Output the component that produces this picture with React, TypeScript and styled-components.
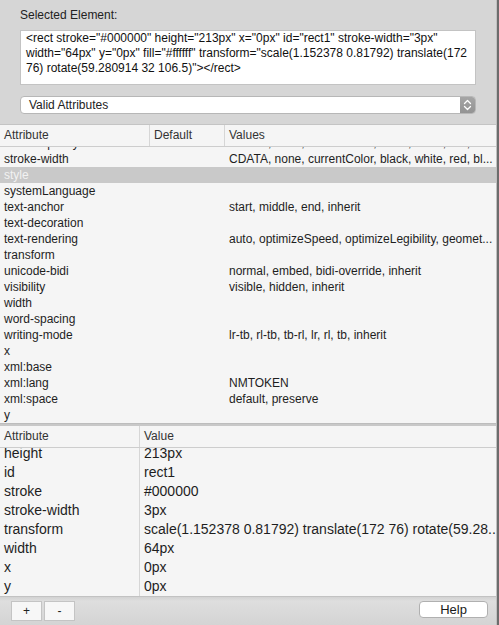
import React, { useLayoutEffect, useRef } from 'react';
import styled, { createGlobalStyle } from 'styled-components';

const Global = createGlobalStyle`
  html, body { margin: 0; padding: 0; width: 499px; height: 625px; overflow: hidden; background: #d6d6d6; }
  body { font-family: "Liberation Sans", Arial, sans-serif; color: #1e1e1e; }
  #root { height: 625px; }
`;

const Window = styled.div`
  width: 499px;
  height: 625px;
  box-sizing: border-box;
  border-right: 2px solid #6c6c6c;
  background: #d6d6d6;
  display: flex;
`;

const Inner = styled.div`
  flex: 1;
  min-width: 0;
  display: flex;
  flex-direction: column;
  border-right: 1px solid #c0c0c0;
`;

const TopPanel = styled.div`
  height: 124px;
  box-sizing: border-box;
  padding: 8px 20px 0 20px;
  display: flex;
  flex-direction: column;
`;

const Label = styled.div`
  font-size: 12px;
  line-height: 14px;
  height: 14px;
  color: #222;
`;

const SourceBox = styled.div`
  margin-top: 8px;
  height: 55px;
  box-sizing: border-box;
  background: #fff;
  border: 1px solid #c3c3c3;
  padding: 0 5px;
  font-size: 12px;
  line-height: 15px;
  white-space: pre;
  overflow: hidden;
  color: #111;
`;

const Select = styled.div`
  margin-top: 11px;
  height: 18px;
  box-sizing: border-box;
  background: #fff;
  border: 1px solid #b7b7b7;
  border-radius: 4px;
  display: flex;
  align-items: stretch;
  overflow: hidden;
`;

const SelectText = styled.div`
  flex: 1;
  padding-left: 8px;
  font-size: 12px;
  line-height: 16px;
  color: #222;
`;

const SelectArrow = styled.div`
  width: 15px;
  background: linear-gradient(#a5a5a5, #939393);
  display: flex;
  align-items: center;
  justify-content: center;
`;

const UpperTable = styled.div`
  border-top: 1px solid #c4c4c4;
  background: #f5f5f5;
  display: flex;
  flex-direction: column;
`;

const HeaderRow = styled.div<{ $cols: string }>`
  height: 21px;
  display: grid;
  grid-template-columns: ${(p) => p.$cols};
  border-bottom: 1px solid #cdcdcd;
  background: #f5f5f5;
`;

const HeaderCell = styled.div<{ $divider?: boolean }>`
  font-size: 12px;
  line-height: 21px;
  padding-left: 4px;
  color: #333;
  border-right: ${(p) => (p.$divider ? '1px solid #d6d6d6' : 'none')};
  white-space: nowrap;
  overflow: hidden;
`;

const ScrollBody = styled.div<{ $height: number }>`
  height: ${(p) => p.$height}px;
  overflow: hidden;
`;

const AttrRow = styled.div<{ $selected?: boolean }>`
  display: grid;
  grid-template-columns: 150px 75px 1fr;
  height: 16px;
  font-size: 12px;
  line-height: 16px;
  background: ${(p) => (p.$selected ? '#c9c9c9' : 'transparent')};
  color: ${(p) => (p.$selected ? '#f2f2f2' : '#1e1e1e')};
`;

const AttrCell = styled.div`
  padding-left: 4px;
  white-space: nowrap;
  overflow: hidden;
`;

const Splitter = styled.div`
  height: 3px;
  background: #c8c8c8;
  border-top: 1px solid #bdbdbd;
  box-sizing: border-box;
`;

const LowerTable = styled.div`
  background: #f5f5f5;
  display: flex;
  flex-direction: column;
`;

const ValueRow = styled.div`
  display: grid;
  grid-template-columns: 140px 1fr;
  height: 19px;
  font-size: 14px;
  line-height: 19px;
  color: #1e1e1e;
`;

const ValueName = styled.div`
  padding-left: 4px;
  border-right: 1px solid #d6d6d6;
  white-space: nowrap;
  overflow: hidden;
`;

const ValueText = styled.div`
  padding-left: 4px;
  white-space: nowrap;
  overflow: hidden;
`;

const BottomBar = styled.div`
  height: 29px;
  box-sizing: border-box;
  border-top: 1px solid #c2c2c2;
  background: linear-gradient(#d2d2d2, #dedede 4px, #d4d4d4);
  display: flex;
  align-items: flex-start;
  padding: 4px 8px 0 11px;
`;

const SquareButton = styled.button`
  width: 31px;
  height: 20px;
  margin: 0 2px 0 0;
  padding: 0;
  background: #f7f7f7;
  border: 1px solid #c4c4c4;
  border-radius: 0;
  font-family: "Liberation Sans", Arial, sans-serif;
  font-size: 12px;
  line-height: 18px;
  color: #222;
`;

const Spacer = styled.div`
  flex: 1;
`;

const HelpButton = styled.button`
  width: 69px;
  height: 17px;
  margin: 0;
  padding: 0;
  background: #fff;
  border: 1px solid #b0b0b0;
  border-radius: 4px;
  font-family: "Liberation Sans", Arial, sans-serif;
  font-size: 13px;
  line-height: 15px;
  color: #1a1a1a;
`;

const attributes: [string, string][] = [
  ['stroke', 'CDATA, none, currentColor, black, white, red, bl...'],
  ['stroke-dasharray', 'CDATA, none, inherit'],
  ['stroke-dashoffset', 'CDATA, inherit'],
  ['stroke-linecap', 'butt, round, square, inherit'],
  ['stroke-linejoin', 'miter, round, bevel, inherit'],
  ['stroke-miterlimit', 'CDATA, inherit'],
  ['stroke-opacity', 'CDATA, none, currentColor, black, white, red, bl...'],
  ['stroke-width', 'CDATA, none, currentColor, black, white, red, bl...'],
  ['style', ''],
  ['systemLanguage', ''],
  ['text-anchor', 'start, middle, end, inherit'],
  ['text-decoration', ''],
  ['text-rendering', 'auto, optimizeSpeed, optimizeLegibility, geomet...'],
  ['transform', ''],
  ['unicode-bidi', 'normal, embed, bidi-override, inherit'],
  ['visibility', 'visible, hidden, inherit'],
  ['width', ''],
  ['word-spacing', ''],
  ['writing-mode', 'lr-tb, rl-tb, tb-rl, lr, rl, tb, inherit'],
  ['x', ''],
  ['xml:base', ''],
  ['xml:lang', 'NMTOKEN'],
  ['xml:space', 'default, preserve'],
  ['y', ''],
];

const values: [string, string][] = [
  ['fill', '#ffffff'],
  ['height', '213px'],
  ['id', 'rect1'],
  ['stroke', '#000000'],
  ['stroke-width', '3px'],
  ['transform', 'scale(1.152378 0.81792) translate(172 76) rotate(59.28...'],
  ['width', '64px'],
  ['x', '0px'],
  ['y', '0px'],
];

const sourceLines = [
  '<rect stroke="#000000" height="213px" x="0px" id="rect1" stroke-width="3px"',
  'width="64px" y="0px" fill="#ffffff" transform="scale(1.152378 0.81792) translate(172',
  '76) rotate(59.280914 32 106.5)"></rect>',
];

function useScrollToBottom() {
  const ref = useRef<HTMLDivElement>(null);
  useLayoutEffect(() => {
    if (ref.current) ref.current.scrollTop = ref.current.scrollHeight;
  });
  return ref;
}

const Chevrons = () => (
  <svg width="9" height="12" viewBox="0 0 9 12">
    <path d="M1.5 4.5 L4.5 1.5 L7.5 4.5" fill="none" stroke="#fff" strokeWidth="1.3" strokeLinecap="round" strokeLinejoin="round" />
    <path d="M1.5 7.5 L4.5 10.5 L7.5 7.5" fill="none" stroke="#fff" strokeWidth="1.3" strokeLinecap="round" strokeLinejoin="round" />
  </svg>
);

export default function App() {
  const upperRef = useScrollToBottom();
  const lowerRef = useScrollToBottom();
  return (
    <>
      <Global />
      <Window>
        <Inner>
          <TopPanel>
            <Label>Selected Element:</Label>
            <SourceBox>{sourceLines.join('\n')}</SourceBox>
            <Select>
              <SelectText>Valid Attributes</SelectText>
              <SelectArrow>
                <Chevrons />
              </SelectArrow>
            </Select>
          </TopPanel>
          <UpperTable>
            <HeaderRow $cols="150px 75px 1fr">
              <HeaderCell $divider>Attribute</HeaderCell>
              <HeaderCell $divider>Default</HeaderCell>
              <HeaderCell>Values</HeaderCell>
            </HeaderRow>
            <ScrollBody ref={upperRef} $height={276}>
              {attributes.map(([name, vals]) => (
                <AttrRow key={name} $selected={name === 'style'}>
                  <AttrCell>{name}</AttrCell>
                  <AttrCell />
                  <AttrCell>{vals}</AttrCell>
                </AttrRow>
              ))}
            </ScrollBody>
          </UpperTable>
          <Splitter />
          <LowerTable>
            <HeaderRow $cols="140px 1fr">
              <HeaderCell $divider>Attribute</HeaderCell>
              <HeaderCell>Value</HeaderCell>
            </HeaderRow>
            <ScrollBody ref={lowerRef} $height={148}>
              {values.map(([name, val]) => (
                <ValueRow key={name}>
                  <ValueName>{name}</ValueName>
                  <ValueText>{val}</ValueText>
                </ValueRow>
              ))}
            </ScrollBody>
          </LowerTable>
          <BottomBar>
            <SquareButton>+</SquareButton>
            <SquareButton>-</SquareButton>
            <Spacer />
            <HelpButton>Help</HelpButton>
          </BottomBar>
        </Inner>
      </Window>
    </>
  );
}
